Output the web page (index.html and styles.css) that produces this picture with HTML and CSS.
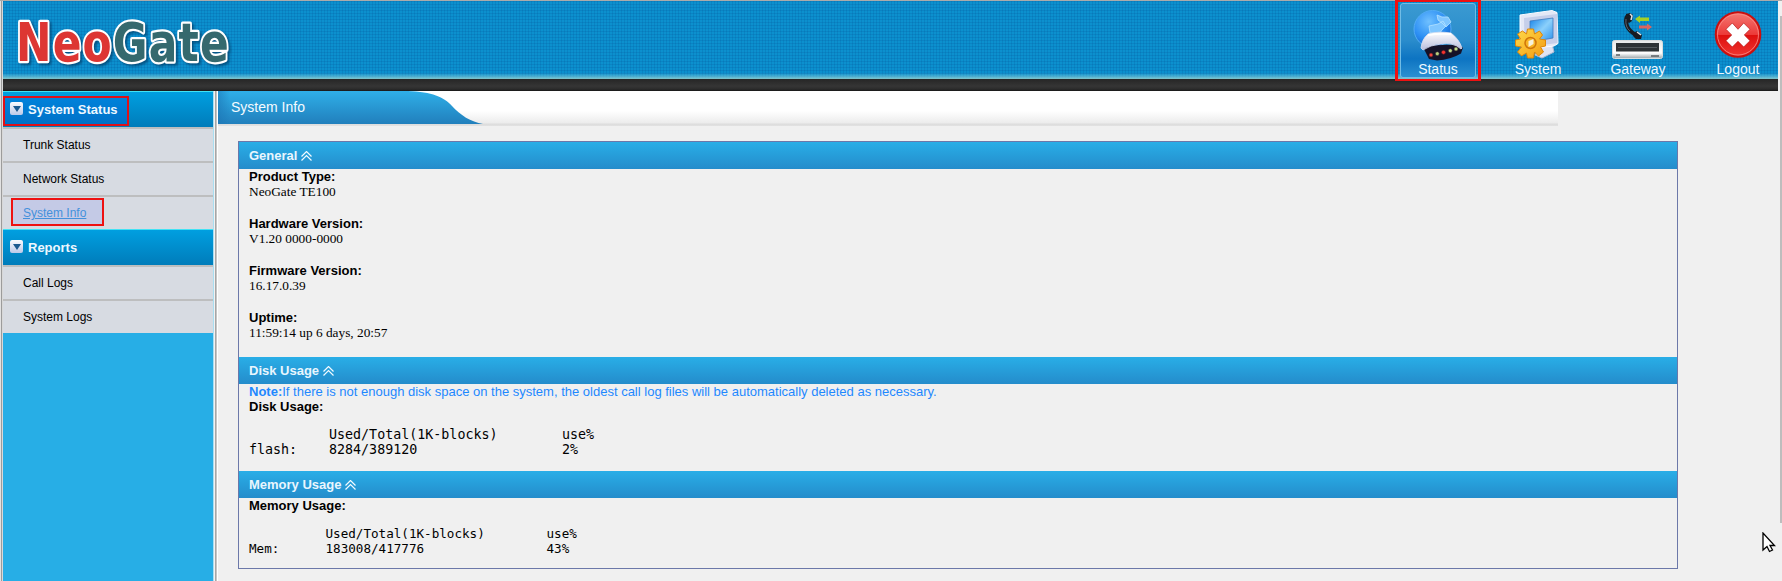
FILE: index.html
```html
<!DOCTYPE html>
<html lang="en">
<head>
<meta charset="utf-8">
<title>NeoGate</title>
<link rel="stylesheet" href="styles.css">
</head>
<body>
<div class="app">
  <header class="topbar">
    <svg class="logo" width="240" height="76" viewBox="0 0 240 76" role="img" aria-label="NeoGate">
      <text class="logo-text" transform="translate(13 59.500) scale(.8 1)" textLength="266"><tspan class="logo-red">Neo</tspan><tspan class="logo-green">Gate</tspan></text>
    </svg>
    <nav class="topnav">
      <a class="nav-item nav-active">
        <svg width="76" height="60" viewBox="0 0 76 60">
          <defs>
            <radialGradient id="globe" cx=".4" cy=".3" r=".75"><stop offset="0" stop-color="#6fc0ff"/><stop offset=".6" stop-color="#2c8ff4"/><stop offset="1" stop-color="#1264cc"/></radialGradient>
            <linearGradient id="shell" x1="0" y1="0" x2="0" y2="1"><stop offset="0" stop-color="#fff"/><stop offset="1" stop-color="#b7bcdd"/></linearGradient>
          </defs>
          <circle cx="32.500" cy="28" r="18.500" fill="url(#globe)" stroke="#52acf6"/>
          <path d="M37 14l5 2 6 0 3 5-5 5-4-4-4-3zM29 25l9-2 5-3 3 5-4 4-2 3H30z" fill="#7fc6ff" stroke="#b5e2ff" stroke-width=".8"/>
          <path d="M23 46l6 12 8 1.500q14-1 24-7l2-6-5-3-30 1z" fill="#141229"/>
          <path d="M21 47q1-9 7-14 10-3 23-1 8 6 11 15l-1 1q-8-7-20-5-11 1-18 6z" fill="url(#shell)" stroke="#d9ddf0" stroke-width=".8"/>
          <path d="M28 34q11-2 23-1" fill="none" stroke="#fff" stroke-width="2"/>
          <g stroke="#2d1620" stroke-width=".6"><circle cx="31" cy="54" r="2" fill="#f4423d"/><circle cx="37.300" cy="52.700" r="2" fill="#b6cf80"/><circle cx="43.500" cy="51.300" r="2.100" fill="#f4322d"/><circle cx="50.300" cy="49.700" r="2" fill="#c0dc8c"/><circle cx="56" cy="48" r="2" fill="#c0dc8c"/></g>
        </svg>
        <span>Status</span>
      </a>
      <a class="nav-item">
        <svg width="76" height="60" viewBox="0 0 76 60">
          <defs>
            <linearGradient id="screen" x1="0" y1="0" x2="1" y2="1"><stop offset="0" stop-color="#1683e8"/><stop offset=".5" stop-color="#8bd0fb"/><stop offset="1" stop-color="#2a8fec"/></linearGradient>
            <linearGradient id="gear" x1="0" y1="0" x2="1" y2="1"><stop offset="0" stop-color="#ffdb4a"/><stop offset="1" stop-color="#f39a12"/></linearGradient>
          </defs>
          <path d="M40 45l12-2 2 8-12 6-7-3z" fill="#dfe3f2" stroke="#b5bbd5"/>
          <path d="M20 14L52 9.500l5 2 1 31-4 2.500-28 3-6-4z" fill="#e4e8f6" stroke="#fafbff"/>
          <path d="M24 17l33-4 .5 29-30 4-3-2z" fill="#c6cfea"/>
          <path d="M30 20l23-3v20l-23 4z" fill="url(#screen)" stroke="#3f79bd" stroke-width=".8"/>
          <g transform="translate(30.500 42)">
            <path d="M-3-14H3L4-9 9-12 12-8 9-4 15-3V3L10 4 13 9 8 13 4 9 3 15H-3L-4 10-9 13-13 9-9 4-15 3V-3L-10-4-13-9-8-12-4-9Z" fill="url(#gear)" stroke="#df8507" stroke-linejoin="round"/>
            <circle r="5.500" fill="#f7b425" stroke="#cf7509" stroke-width="1.500"/>
            <path d="M-2 4V-2L3-4V1Z" fill="#f7f1dc"/>
          </g>
        </svg>
        <span>System</span>
      </a>
      <a class="nav-item">
        <svg width="76" height="60" viewBox="0 0 76 60">
          <defs><linearGradient id="box" x1="0" y1="0" x2="0" y2="1"><stop offset="0" stop-color="#e6e8e8"/><stop offset=".7" stop-color="#fff"/><stop offset="1" stop-color="#9ba4a8"/></linearGradient></defs>
          <path d="M27 15q-2 5 0 10 2 5 9 9" fill="none" stroke="#171b22" stroke-width="4"/>
          <path d="M26 13l4-1 3 2-1 6-3 2-3-2zM34 32l3-2 5 4-1 4-5 0-3-3z" fill="#171b22"/>
          <path d="M30 13l2 2-1 4M37 31l4 3" fill="none" stroke="#dfe5ea" stroke-width="1.500"/>
          <path d="M26 18q-1 8 4 12" fill="none" stroke="#59636f"/>
          <path d="M35 18l5-3.500v2h9v3.500h-9v2z" fill="#a5cf27"/>
          <path d="M52 26l-5-3.500v2h-8v3h8v2z" fill="#dc655e"/>
          <rect x="12.500" y="39.500" width="50" height="18" rx="2" fill="url(#box)" stroke="#d8dcde"/>
          <rect x="16" y="42" width="43" height="8.500" fill="#2d3235"/>
          <path d="M18 46.500h39" stroke="#555b5f"/>
          <path d="M16 54h4M51 55h8" stroke="#596064" stroke-width="1.500"/>
        </svg>
        <span>Gateway</span>
      </a>
      <a class="nav-item">
        <svg width="76" height="60" viewBox="0 0 76 60">
          <defs><linearGradient id="stop" x1="0" y1="0" x2="0" y2="1"><stop offset="0" stop-color="#f47a75"/><stop offset=".5" stop-color="#ec3a38"/><stop offset=".52" stop-color="#de100e"/><stop offset="1" stop-color="#f13632"/></linearGradient></defs>
          <circle cx="38" cy="33.500" r="22.300" fill="url(#stop)" stroke="#c9100f" stroke-width="2"/>
          <circle cx="38" cy="33.500" r="20.500" fill="none" stroke="#fa8e88" stroke-width=".8"/>
          <path d="M32.300 22L38 28.300 43.700 22 50 28.300 44.300 34 50 39.700 43.700 46 38 40.300 32.300 46 26 39.700 31.700 34 26 28.300Z" fill="#fff" stroke="#b51717" stroke-width=".7"/>
        </svg>
        <span>Logout</span>
      </a>
    </nav>
  </header>
  <div class="darkbar"></div>
  <div class="body">
    <aside class="sidebar">
      <h2 class="menu-head menu-marked"><i class="toggle"></i><span>System Status</span></h2>
      <a class="menu-item">Trunk Status</a>
      <a class="menu-item">Network Status</a>
      <a class="menu-item menu-current">System Info</a>
      <h2 class="menu-head"><i class="toggle"></i><span>Reports</span></h2>
      <a class="menu-item">Call Logs</a>
      <a class="menu-item">System Logs</a>
    </aside>
    <div class="divider"></div>
    <main class="content">
      <div class="titlebar">
        <svg class="tab" width="266" height="33" viewBox="0 0 266 33">
          <defs>
            <linearGradient id="tab" x1="0" y1="0" x2="0" y2="1"><stop offset="0" stop-color="#2fafe8"/><stop offset="1" stop-color="#217fbc"/></linearGradient>
            <linearGradient id="edge" x1="0" y1="0" x2="1" y2="0"><stop offset="0" stop-color="#1b74b4" stop-opacity=".55"/><stop offset="1" stop-color="#1b74b4" stop-opacity="0"/></linearGradient>
          </defs>
          <path d="M0 0H190C214 1 226 6 234 15S253 31 265 33H0Z" fill="url(#tab)"/>
          <path d="M0 0H12V33H0Z" fill="url(#edge)"/>
        </svg>
        <h1 class="title">System Info</h1>
      </div>
      <div class="panel">
        <h3 class="section-head">General <svg class="chev" width="11" height="10" viewBox="0 0 11 10"><path d="M.5 5.500l5-5 5 5M.5 9.500l5-5 5 5"/></svg></h3>
        <dl class="section general">
          <dt>Product Type:</dt><dd>NeoGate TE100</dd>
          <dt>Hardware Version:</dt><dd>V1.20 0000-0000</dd>
          <dt>Firmware Version:</dt><dd>16.17.0.39</dd>
          <dt>Uptime:</dt><dd>11:59:14 up 6 days, 20:57</dd>
        </dl>
        <h3 class="section-head">Disk Usage <svg class="chev" width="11" height="10" viewBox="0 0 11 10"><path d="M.5 5.500l5-5 5 5M.5 9.500l5-5 5 5"/></svg></h3>
        <div class="section disk">
          <p class="note"><b>Note:</b>If there is not enough disk space on the system, the oldest call log files will be automatically deleted as necessary.</p>
          <p class="label">Disk Usage:</p>
          <div class="usage usage-disk">
            <span></span><span>Used/Total(1K-blocks)</span><span>use%</span>
            <span>flash:</span><span>8284/389120</span><span>2%</span>
          </div>
        </div>
        <h3 class="section-head">Memory Usage <svg class="chev" width="11" height="10" viewBox="0 0 11 10"><path d="M.5 5.500l5-5 5 5M.5 9.500l5-5 5 5"/></svg></h3>
        <div class="section memory">
          <p class="label">Memory Usage:</p>
          <div class="usage usage-mem">
            <span></span><span>Used/Total(1K-blocks)</span><span>use%</span>
            <span>Mem:</span><span>183008/417776</span><span>43%</span>
          </div>
        </div>
      </div>
    </main>
  </div>
  <div class="scrollbar"></div>
  <svg class="cursor" width="14" height="21" viewBox="0 0 14 21"><path d="M1 1V18L5 14.500 7.500 19.500 10.500 18 8 13.500H12.500Z" fill="#fff" stroke="#000" stroke-width="1.300"/></svg>
</div>
</body>
</html>
```
FILE: styles.css
```css
*, *::before, *::after { box-sizing: border-box; }
body, h1, h2, h3, p, dl, dd { margin: 0; }
body { background: #f0f0f0; font-family: "Liberation Sans", Arial, sans-serif; overflow: hidden; }

.app {
  position: relative;
  width: 1782px;
  height: 581px;
  padding: 1px 4px 0 3px;
  background: linear-gradient(90deg, #e2e2e2 0 1px, #9c9c9c 1px 2px, #d8d8d8 2px 3px, transparent 3px);
  display: flex;
  flex-direction: column;
  overflow: hidden;
}
.app::before { content: ""; position: absolute; left: 0; top: 0; width: 100%; height: 1px; background: #ababab; }

.topbar {
  height: 78px;
  display: flex;
  justify-content: space-between;
  padding-right: 2px;
  background:
    linear-gradient(180deg, transparent 72px, rgba(120, 200, 215, .35) 74px, rgba(140, 210, 215, .75) 77px, #83bfc0 78px),
    repeating-linear-gradient(90deg, rgba(0, 70, 140, .16) 0 1px, transparent 1px 3px),
    repeating-linear-gradient(180deg, rgba(0, 70, 140, .16) 0 1px, transparent 1px 3px),
    #0c90ce;
}
.logo { flex: none; filter: drop-shadow(2px 2px 1px rgba(0, 50, 90, .6)); }
.logo-text {
  font: bold 53px "DejaVu Sans", sans-serif;
  stroke: #fff;
  stroke-width: 4.5px;
  stroke-linejoin: round;
  paint-order: stroke;
}
.logo-red { fill: #dd3633; }
.logo-green { fill: #35696e; }

.topnav { display: flex; gap: 24px; }
.nav-item {
  position: relative;
  width: 76px;
  height: 77px;
  display: flex;
  flex-direction: column;
  align-items: center;
  color: #eff8ff;
  font-size: 14px;
  line-height: 16px;
}
.nav-item svg { display: block; flex: none; }
.nav-active::before {
  content: "";
  position: absolute;
  inset: 2px 0 0 0;
  border: 1px solid #72bce5;
  border-radius: 3px;
  background: linear-gradient(180deg, #3a9ad1 0, #2a8ccc 50%, #0d74c2 75%, #2b8fd1 100%);
}
.nav-active::after { content: ""; position: absolute; inset: -1px -5px -3px -5px; border: solid #ee1111; border-width: 2px 3px; z-index: 2; }
.nav-active > * { position: relative; }

.darkbar { flex: none; height: 12px; background: linear-gradient(180deg, #262626, #353535 60%, #2b2b2b 85%, #171717); }

.body { flex: 1; display: flex; }
.sidebar { flex: none; width: 210px; background: #27aee6; }
.menu-head {
  position: relative;
  height: 36px;
  display: flex;
  align-items: center;
  gap: 5px;
  padding: 0 0 1px 7px;
  border-top: 1px solid #42e2f4;
  background: linear-gradient(180deg, #009fe0, #007cba);
  color: #eef8ff;
  font-size: 13px;
}
.menu-head span { position: relative; }
.toggle {
  position: relative;
  width: 13px;
  height: 13px;
  margin-top: -2px;
  border-radius: 2px;
  background: linear-gradient(180deg, #fafcff, #bcc9e8);
}
.toggle::after { content: ""; position: absolute; left: 3px; top: 4px; border: 4px solid transparent; border-top: 6px solid #1b5a90; border-bottom: 0; }
.menu-marked::before {
  content: "";
  position: absolute;
  left: 0;
  top: 4px;
  width: 126px;
  height: 30px;
  border: 2.500px solid #e01018;
  background: rgba(0, 90, 220, .35);
}
.menu-item {
  position: relative;
  display: block;
  height: 34px;
  padding-left: 20px;
  border-top: 2px solid #bdbebf;
  background: #d7dbe2;
  color: #000;
  font-size: 12px;
  line-height: 33px;
}
.menu-current { color: #2b8fd4; text-decoration: underline; }
.menu-current::after {
  content: "";
  position: absolute;
  left: 8px;
  top: 1px;
  width: 93px;
  height: 28px;
  border: 2px solid #ee1111;
  background: rgba(140, 150, 245, .25);
}
.divider { flex: none; width: 5px; background: linear-gradient(90deg, #a9dff2 0 1px, #f2f2f2 1px 2px, #a6a6a6 2px 3px, #c6c6c6 3px 4px, #fff 4px 5px); }

.content { flex: 1; }
.titlebar {
  width: 1340px;
  height: 35px;
  display: grid;
  background: linear-gradient(180deg, #fff 0 20px, #ececec 32px, #dcdcdc 33px, #e2e2e2 35px);
}
.tab, .title { grid-area: 1 / 1; }
.title { padding: 8px 0 0 13px; color: #f4fbff; font-size: 14px; font-weight: normal; line-height: 16px; }

.panel { width: 1440px; margin: 15px 0 0 20px; border: 1px solid #6c78a9; }
.section-head {
  height: 27px;
  padding-left: 10px;
  background: linear-gradient(180deg, #29aee7, #248ccb);
  color: #e9f6fe;
  font-size: 13px;
  line-height: 28px;
}
.chev { vertical-align: -1px; fill: none; stroke: #f2faff; stroke-width: 1.2; }
.section { padding-left: 10px; font-size: 13px; line-height: 15px; }
.general { height: 188px; }
.general dt, .label { font-weight: bold; }
.general dd { height: 32px; font-family: "Liberation Serif", "Times New Roman", serif; font-size: 13.330px; }
.disk { height: 87px; }
.memory { height: 70px; }
.note { color: #1e88ff; }
.usage { display: grid; margin-top: 13px; font-family: "DejaVu Sans Mono", monospace; line-height: 15px; white-space: nowrap; }
.usage-disk { grid-template-columns: 80px 233px auto; grid-auto-rows: 15px; font-size: 13.330px; }
.usage-mem { grid-template-columns: 76.500px 221px auto; grid-auto-rows: 15px; font-size: 12.600px; }

.scrollbar { position: absolute; right: 0; top: 16px; width: 2px; height: 507px; background: #bdbdbd; }
.cursor { position: absolute; left: 1762px; top: 532px; }
```
